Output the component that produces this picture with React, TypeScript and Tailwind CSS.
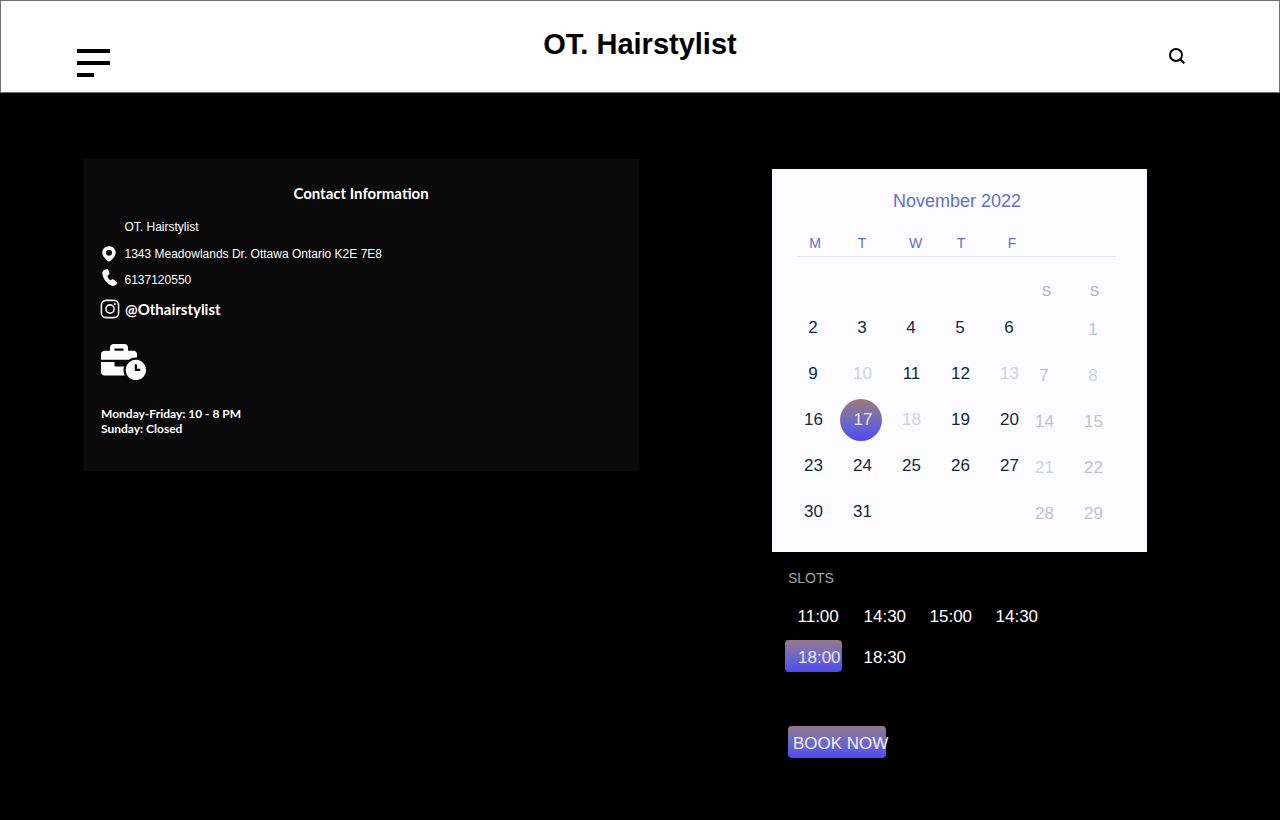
import { FaBusinessTime } from "react-icons/fa";

const weekdayRows: string[][] = [
  ["2", "3", "4", "5", "6"],
  ["9", "10", "11", "12", "13"],
  ["16", "17", "18", "19", "20"],
  ["23", "24", "25", "26", "27"],
  ["30", "31", "", "", ""],
];
const weekendRows: string[][] = [
  ["", "1"],
  ["7", "8"],
  ["14", "15"],
  ["21", "22"],
  ["28", "29"],
];
const lightDays = ["10", "13", "18", "8", "21"];
const slots = ["11:00", "14:30", "15:00", "14:30", "18:00", "18:30"];

function Header() {
  return (
    <header className="flex h-[93px] justify-between border border-[#707070] bg-white pr-[94px] pl-[76px] text-black">
      <button aria-label="Menu" className="mt-12 flex h-7 w-[194px] flex-col gap-2">
        <span className="h-1 w-[33px] bg-black" />
        <span className="h-1 w-[33px] bg-black" />
        <span className="h-1 w-[16.5px] bg-black" />
      </button>
      <h1 className="mt-[26px] mr-[-18px] text-[29px] leading-[34px] font-bold whitespace-nowrap">OT. Hairstylist</h1>
      <button aria-label="Search" className="mt-[47px] flex h-4 w-[194px] justify-end">
        <svg viewBox="0 0 16 16" className="size-4" fill="none" stroke="currentColor" strokeWidth="2">
          <circle cx="7" cy="7" r="6" />
          <path d="M11.2 11.2 15.3 15.3" />
        </svg>
      </button>
    </header>
  );
}

function PinIcon() {
  return (
    <svg viewBox="0 0 14 16" className="ml-[0.5px] h-4 w-3.5" fill="currentColor">
      <path
        fillRule="evenodd"
        d="M7 .2C3.2.2.3 3 .3 6.6c0 3.3 2.7 6.300 6.700 9.200 4-2.900 6.700-5.900 6.700-9.200C13.700 3 10.800.2 7 .2zM7 3.700a3 3 0 1 1 0 6 3 3 0 0 1 0-6z"
      />
    </svg>
  );
}

function PhoneIcon() {
  return (
    <svg viewBox="0 0 16 17" className="ml-[0.5px] h-[17px] w-4" fill="currentColor">
      <path d="M2.6.8 4.3.3c1.1-.3 1.9.2 2.3 1.2l.7 1.900c.3.9.1 1.600-.5 2.200L5.400 6.900c.3 1.400 1.300 3 2.700 4l2.100-.5c.8-.2 1.500 0 2 .6l2.800 1.900c.6.7.5 1.500-.1 2.100l-1.200 1.100c-.9.8-2.300 1-3.600.6C4.900 15.100.8 9.900.4 4.300.3 2.600.9 1.300 2.600.8z" />
    </svg>
  );
}

function InstagramIcon() {
  return (
    <svg viewBox="0 0 20 20" className="size-5 text-[#ececec]" fill="none" stroke="currentColor" strokeWidth="1.6">
      <rect x="1.4" y="1.4" width="17.2" height="17.2" rx="4.6" />
      <circle cx="10" cy="10" r="4.1" />
      <circle cx="14.9" cy="5.1" r="1.1" fill="currentColor" stroke="none" />
    </svg>
  );
}

function ContactCard() {
  return (
    <section className="mt-[66px] h-[312px] w-[556px] bg-[#0a0a0a] text-white">
      <h2 className="pt-6 text-center font-[Lato,sans-serif] text-[15px] leading-5 font-bold">
        Contact Information
      </h2>
      <div className="flex flex-col pl-[18px] text-xs leading-[14px]">
        <p className="mt-[17px] pl-[23.5px]">OT. Hairstylist</p>
        <div className="mt-3 flex h-4 items-center">
          <PinIcon />
          <span className="ml-[9px]">1343 Meadowlands Dr. Ottawa Ontario K2E 7E8</span>
        </div>
        <div className="mt-[7px] flex h-[18px] items-start">
          <PhoneIcon />
          <span className="mt-1 ml-[7px]">6137120550</span>
        </div>
        <div className="mt-3 -ml-px flex h-5 items-center">
          <InstagramIcon />
          <span className="ml-[5px] font-[Lato,sans-serif] text-[15px] leading-5 font-bold">@Othairstylist</span>
        </div>
        <FaBusinessTime className="mt-[25px] h-9 w-[45px]" />
        <p className="mt-[26px] font-[Lato,sans-serif] text-xs leading-[15px] font-bold">
          Monday-Friday: 10 - 8 PM
          <br />
          Sunday: Closed
        </p>
      </div>
    </section>
  );
}

function Day({ day }: { day: string }) {
  if (day === "17") {
    return (
      <div className="flex h-[46px] items-center justify-center">
        <span className="-ml-[3px] flex size-[42px] items-center justify-center rounded-full bg-linear-to-b from-[#9c7878] to-[#4f46f5] pl-[5px] text-[#e8e2fa]">
          {day}
        </span>
      </div>
    );
  }
  return (
    <div
      className={
        "flex h-[46px] items-center justify-center" +
        (lightDays.includes(day) ? " text-[#d0d2d8]" : "") +
        (day.length === 2 ? " pl-px" : "")
      }
    >
      {day}
    </div>
  );
}

function Calendar() {
  return (
    <section className="h-[383px] w-[375px] bg-[#fcfcff]">
      <h2 className="pt-[21px] pr-[5px] text-center text-lg leading-[22px] text-[#626fcc]">November 2022</h2>
      <div className="mt-[23px] ml-[19px] grid grid-cols-[48px_46px_61px_30px_72px] text-center text-sm leading-4 text-[#626fcc]">
        {["M", "T", "W", "T", "F"].map((d, i) => (
          <span key={i}>{d}</span>
        ))}
      </div>
      <div className="mt-[5px] ml-[25px] h-px w-[319px] bg-[#e4e4f2]" />
      <div className="mt-[26px] flex justify-end gap-[38.5px] pr-[48px] text-sm leading-4 text-[#a5ace0]">
        <span>S</span>
        <span>S</span>
      </div>
      <div className="mt-[6px] ml-[16.5px] flex items-start text-[17px] leading-5">
        <div className="grid grid-cols-[repeat(5,49px)] text-[#14283c]">
          {weekdayRows.flat().map((d, i) => (
            <Day key={i} day={d} />
          ))}
        </div>
        <div className="mt-0.5 -ml-3.5 grid grid-cols-[49px_49px] text-[#c0c2c5]">
          {weekendRows.flat().map((d, i) => (
            <Day key={i} day={d} />
          ))}
        </div>
      </div>
    </section>
  );
}

function Slots() {
  return (
    <section className="text-white">
      <h3 className="mt-[18px] ml-4 text-sm leading-4 text-[#a3a4ad]">SLOTS</h3>
      <div className="mt-[13px] ml-[13px] grid w-[264px] grid-cols-[repeat(4,66px)] gap-y-[9px] text-[17px]">
        {slots.map((s, i) => (
          <button
            key={i}
            className={
              s === "18:00"
                ? "flex h-8 w-[57px] items-center rounded bg-linear-to-b from-[#97788b] to-[#4f46f5] pt-1 pl-[13px] text-[#e8e2fa]"
                : "flex h-8 w-[57px] items-center pt-1 pl-[12.5px]"
            }
          >
            {s}
          </button>
        ))}
      </div>
      <button className="mt-[54px] ml-4 flex h-8 w-[98px] items-center rounded bg-linear-to-b from-[#97788b] to-[#4f46f5] pt-1 pl-[5px] text-[17px] whitespace-nowrap text-[#f0ecfc]">
        BOOK NOW
      </button>
    </section>
  );
}

export default function App() {
  return (
    <div className="h-[820px] w-[1280px] overflow-hidden bg-black font-['Liberation_Sans',Arial,sans-serif]">
      <Header />
      <main className="flex items-start gap-[133px] pl-[83px]">
        <ContactCard />
        <div className="mt-[76px] w-[375px]">
          <Calendar />
          <Slots />
        </div>
      </main>
    </div>
  );
}
